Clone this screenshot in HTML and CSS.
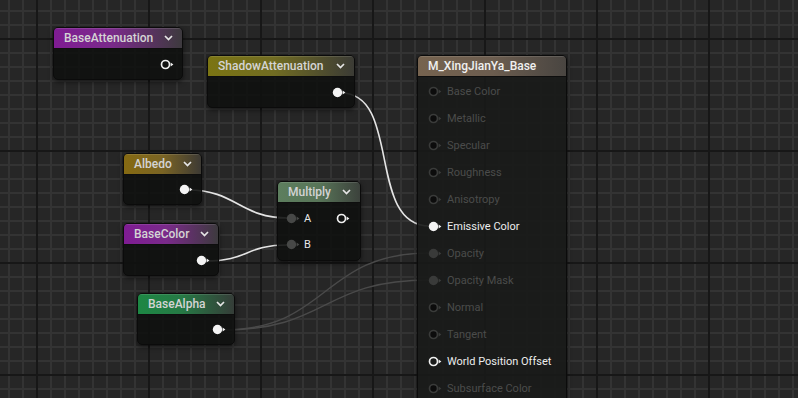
FILE: index.html
```html
<!DOCTYPE html>
<html lang="en">
<head>
  <meta charset="UTF-8" />
  <title>Material Graph</title>
  <link rel="stylesheet" href="styles.css">
</head>
<body>
  <div class="graph">
    <!-- wires, drawn under the nodes -->
    <svg class="wires" width="798" height="398" viewBox="0 0 798 398">
      <path class="wire dim" d="M222,330 C330,330 320,253 430,253" />
      <path class="wire dim" d="M222,330 C330,330 320,280 430,280" />
      <path class="wire" d="M341,93 C402,93 366,226 430,226" />
      <path class="wire" d="M188,190 C236,190 240,218 288,218" />
      <path class="wire" d="M205,261 C250,261 244,245 288,245" />
    </svg>

    <!-- parameter nodes -->
    <div class="node node-base-att">
      <div class="node-head purple">
        <span class="node-title">BaseAttenuation</span>
        <svg class="chev" width="9" height="6" viewBox="0 0 9 6"><polyline points="1,1 4.5,4.5 8,1" /></svg>
      </div>
      <div class="node-body out">
        <svg class="pin" width="14" height="11" viewBox="0 0 14 11"><circle class="ring" cx="5.5" cy="5.5" r="4" /><path class="tip" d="M10.6,3.5 L13.4,5.5 L10.6,7.5 Z" /></svg>
      </div>
    </div>

    <div class="node node-shadow-att">
      <div class="node-head olive">
        <span class="node-title">ShadowAttenuation</span>
        <svg class="chev" width="9" height="6" viewBox="0 0 9 6"><polyline points="1,1 4.5,4.5 8,1" /></svg>
      </div>
      <div class="node-body out">
        <svg class="pin" width="14" height="11" viewBox="0 0 14 11"><circle class="dot" cx="5.5" cy="5.5" r="4.7" /><path class="tip" d="M10.6,3.5 L13.4,5.5 L10.6,7.5 Z" /></svg>
      </div>
    </div>

    <div class="node node-albedo">
      <div class="node-head gold">
        <span class="node-title">Albedo</span>
        <svg class="chev" width="9" height="6" viewBox="0 0 9 6"><polyline points="1,1 4.5,4.5 8,1" /></svg>
      </div>
      <div class="node-body out">
        <svg class="pin" width="14" height="11" viewBox="0 0 14 11"><circle class="dot" cx="5.5" cy="5.5" r="4.7" /><path class="tip" d="M10.6,3.5 L13.4,5.5 L10.6,7.5 Z" /></svg>
      </div>
    </div>

    <div class="node node-basecolor">
      <div class="node-head purple">
        <span class="node-title">BaseColor</span>
        <svg class="chev" width="9" height="6" viewBox="0 0 9 6"><polyline points="1,1 4.5,4.5 8,1" /></svg>
      </div>
      <div class="node-body out">
        <svg class="pin" width="14" height="11" viewBox="0 0 14 11"><circle class="dot" cx="5.5" cy="5.5" r="4.7" /><path class="tip" d="M10.6,3.5 L13.4,5.5 L10.6,7.5 Z" /></svg>
      </div>
    </div>

    <div class="node node-basealpha">
      <div class="node-head green">
        <span class="node-title">BaseAlpha</span>
        <svg class="chev" width="9" height="6" viewBox="0 0 9 6"><polyline points="1,1 4.5,4.5 8,1" /></svg>
      </div>
      <div class="node-body out">
        <svg class="pin" width="14" height="11" viewBox="0 0 14 11"><circle class="dot" cx="5.5" cy="5.5" r="4.7" /><path class="tip" d="M10.6,3.5 L13.4,5.5 L10.6,7.5 Z" /></svg>
      </div>
    </div>

    <!-- multiply -->
    <div class="node node-multiply">
      <div class="node-head sage">
        <span class="node-title">Multiply</span>
        <svg class="chev" width="9" height="6" viewBox="0 0 9 6"><polyline points="1,1 4.5,4.5 8,1" /></svg>
      </div>
      <div class="node-body mult">
        <div class="mult-row">
          <div class="in-pin">
            <svg class="pin" width="14" height="11" viewBox="0 0 14 11"><circle class="dot grey" cx="5.5" cy="5.5" r="4.7" /><path class="tip grey" d="M10.6,3.5 L13.4,5.5 L10.6,7.5 Z" /></svg>
            <span>A</span>
          </div>
          <svg class="pin" width="14" height="11" viewBox="0 0 14 11"><circle class="ring" cx="5.5" cy="5.5" r="4" /><path class="tip" d="M10.6,3.5 L13.4,5.5 L10.6,7.5 Z" /></svg>
        </div>
        <div class="mult-row">
          <div class="in-pin">
            <svg class="pin" width="14" height="11" viewBox="0 0 14 11"><circle class="dot grey" cx="5.5" cy="5.5" r="4.7" /><path class="tip grey" d="M10.6,3.5 L13.4,5.5 L10.6,7.5 Z" /></svg>
            <span>B</span>
          </div>
        </div>
      </div>
    </div>

    <!-- material result node -->
    <div class="node node-material">
      <div class="node-head brown">
        <span class="node-title bright">M_XingJianYa_Base</span>
      </div>
      <ul class="mat-inputs">
        <li class="off"><svg class="pin" width="14" height="11" viewBox="0 0 14 11"><circle class="ring off" cx="5.5" cy="5.5" r="4" /><path class="tip off" d="M10.6,3.5 L13.4,5.5 L10.6,7.5 Z" /></svg>Base Color</li>
        <li class="off"><svg class="pin" width="14" height="11" viewBox="0 0 14 11"><circle class="ring off" cx="5.5" cy="5.5" r="4" /><path class="tip off" d="M10.6,3.5 L13.4,5.5 L10.6,7.5 Z" /></svg>Metallic</li>
        <li class="off"><svg class="pin" width="14" height="11" viewBox="0 0 14 11"><circle class="ring off" cx="5.5" cy="5.5" r="4" /><path class="tip off" d="M10.6,3.5 L13.4,5.5 L10.6,7.5 Z" /></svg>Specular</li>
        <li class="off"><svg class="pin" width="14" height="11" viewBox="0 0 14 11"><circle class="ring off" cx="5.5" cy="5.5" r="4" /><path class="tip off" d="M10.6,3.5 L13.4,5.5 L10.6,7.5 Z" /></svg>Roughness</li>
        <li class="off"><svg class="pin" width="14" height="11" viewBox="0 0 14 11"><circle class="ring off" cx="5.5" cy="5.5" r="4" /><path class="tip off" d="M10.6,3.5 L13.4,5.5 L10.6,7.5 Z" /></svg>Anisotropy</li>
        <li><svg class="pin" width="14" height="11" viewBox="0 0 14 11"><circle class="dot" cx="5.5" cy="5.5" r="4.7" /><path class="tip" d="M10.6,3.5 L13.4,5.5 L10.6,7.5 Z" /></svg>Emissive Color</li>
        <li class="off"><svg class="pin" width="14" height="11" viewBox="0 0 14 11"><circle class="dot off" cx="5.5" cy="5.5" r="4.7" /><path class="tip off" d="M10.6,3.5 L13.4,5.5 L10.6,7.5 Z" /></svg>Opacity</li>
        <li class="off"><svg class="pin" width="14" height="11" viewBox="0 0 14 11"><circle class="dot off" cx="5.5" cy="5.5" r="4.7" /><path class="tip off" d="M10.6,3.5 L13.4,5.5 L10.6,7.5 Z" /></svg>Opacity Mask</li>
        <li class="off"><svg class="pin" width="14" height="11" viewBox="0 0 14 11"><circle class="ring off" cx="5.5" cy="5.5" r="4" /><path class="tip off" d="M10.6,3.5 L13.4,5.5 L10.6,7.5 Z" /></svg>Normal</li>
        <li class="off"><svg class="pin" width="14" height="11" viewBox="0 0 14 11"><circle class="ring off" cx="5.5" cy="5.5" r="4" /><path class="tip off" d="M10.6,3.5 L13.4,5.5 L10.6,7.5 Z" /></svg>Tangent</li>
        <li><svg class="pin" width="14" height="11" viewBox="0 0 14 11"><circle class="ring" cx="5.5" cy="5.5" r="4" /><path class="tip" d="M10.6,3.5 L13.4,5.5 L10.6,7.5 Z" /></svg>World Position Offset</li>
        <li class="off"><svg class="pin" width="14" height="11" viewBox="0 0 14 11"><circle class="ring off" cx="5.5" cy="5.5" r="4" /><path class="tip off" d="M10.6,3.5 L13.4,5.5 L10.6,7.5 Z" /></svg>Subsurface Color</li>
      </ul>
    </div>
  </div>
</body>
</html>
```

FILE: styles.css
```css
* {
  margin: 0;
  padding: 0;
  box-sizing: border-box;
}

html, body {
  width: 100%;
  height: 100%;
  overflow: hidden;
  background: #262626;
  font-family: Roboto, 'Liberation Sans', sans-serif;
}

/* canvas with the editor grid */
.graph {
  position: relative;
  width: 798px;
  height: 398px;
  overflow: hidden;
  background:
    linear-gradient(90deg, #171717 2px, transparent 2px) 36px 0 / 112px 112px,
    linear-gradient(#171717 2px, transparent 2px) 0 38px / 112px 112px,
    linear-gradient(90deg, #333333 2px, transparent 2px) 8px 0 / 14px 14px,
    linear-gradient(#333333 2px, transparent 2px) 0 10px / 14px 14px,
    #262626;
}

.wires {
  position: absolute;
  left: 0;
  top: 0;
}

.wire {
  fill: none;
  stroke: #e4e4e4;
  stroke-width: 1.6;
}

.wire.dim {
  stroke: #4a4a4a;
  stroke-width: 1.4;
}

/* nodes */
.node {
  position: absolute;
  display: flex;
  flex-direction: column;
  border: 1px solid #0b0b0b;
  border-radius: 5px;
  overflow: hidden;
  background: rgba(16, 17, 16, 0.9);
  box-shadow: 0 2px 5px rgba(0, 0, 0, 0.55);
}

.node-head {
  height: 21px;
  flex-shrink: 0;
  display: flex;
  align-items: center;
  justify-content: space-between;
  padding: 0 9px 0 10px;
  border-bottom: 1px solid #0e0e0e;
  box-shadow: inset 0 1px 0 rgba(255, 255, 255, 0.12);
}

.node-title {
  font-size: 12px;
  font-weight: 500;
  color: #d4d4d4;
  white-space: nowrap;
}

.node-title.bright {
  color: #f0f0f0;
}

.chev polyline {
  fill: none;
  stroke: #e6e6e6;
  stroke-width: 1.7;
}

.purple { background: linear-gradient(90deg, #7f1c93 0%, #7a2a8a 45%, #3d3a3e 100%); }
.olive  { background: linear-gradient(90deg, #7b7413 0%, #716c22 45%, #3b3b35 100%); }
.gold   { background: linear-gradient(90deg, #866a12 0%, #7a6424 50%, #3d3a34 100%); }
.green  { background: linear-gradient(90deg, #1d8744 0%, #267a45 45%, #353d38 100%); }
.sage   { background: linear-gradient(90deg, #5d7e5e 0%, #587558 50%, #3c423c 100%); }
.brown  { background: linear-gradient(90deg, #76634f 0%, #6c5d4f 50%, #494541 100%); }

.node-body.out {
  flex: 1;
  display: flex;
  align-items: center;
  justify-content: flex-end;
  padding-right: 8px;
}

.pin {
  display: block;
  flex-shrink: 0;
}

.pin .dot { fill: #f4f4f4; }
.pin .ring { fill: none; stroke: #f0f0f0; stroke-width: 1.7; }
.pin .tip { fill: #f0f0f0; }
.pin .grey { fill: #474847; }
.pin .dot.off { fill: #393a39; }
.pin .ring.off { fill: #0c0c0c; stroke: #3a3b3a; }
.pin .tip.off { fill: #3a3b3a; }

.node-base-att    { left: 53px;  top: 27px;  width: 130px; height: 53px; }
.node-shadow-att  { left: 207px; top: 55px;  width: 148px; height: 53px; }
.node-albedo      { left: 123px; top: 153px; width: 79px;  height: 52px; }
.node-basecolor   { left: 123px; top: 223px; width: 96px;  height: 53px; }
.node-basealpha   { left: 137px; top: 293px; width: 98px;  height: 52px; }
.node-multiply    { left: 277px; top: 181px; width: 84px;  height: 80px; }
.node-material    { left: 417px; top: 55px;  width: 150px; height: 380px; background: rgba(25, 26, 25, 0.92); }

/* multiply rows */
.node-body.mult {
  display: flex;
  flex-direction: column;
  padding: 2px 10px 0 8px;
}

.mult-row {
  height: 26px;
  display: flex;
  align-items: center;
  justify-content: space-between;
}

.in-pin {
  display: flex;
  align-items: center;
  gap: 4px;
  font-size: 11px;
  color: #e8e8e8;
}

/* material inputs */
.mat-inputs {
  list-style: none;
  padding: 1px 0 0 10px;
}

.mat-inputs li {
  height: 27px;
  display: flex;
  align-items: center;
  gap: 5px;
  font-size: 11px;
  color: #ececec;
  white-space: nowrap;
}

.mat-inputs li.off {
  color: #4b4c4b;
}
```
